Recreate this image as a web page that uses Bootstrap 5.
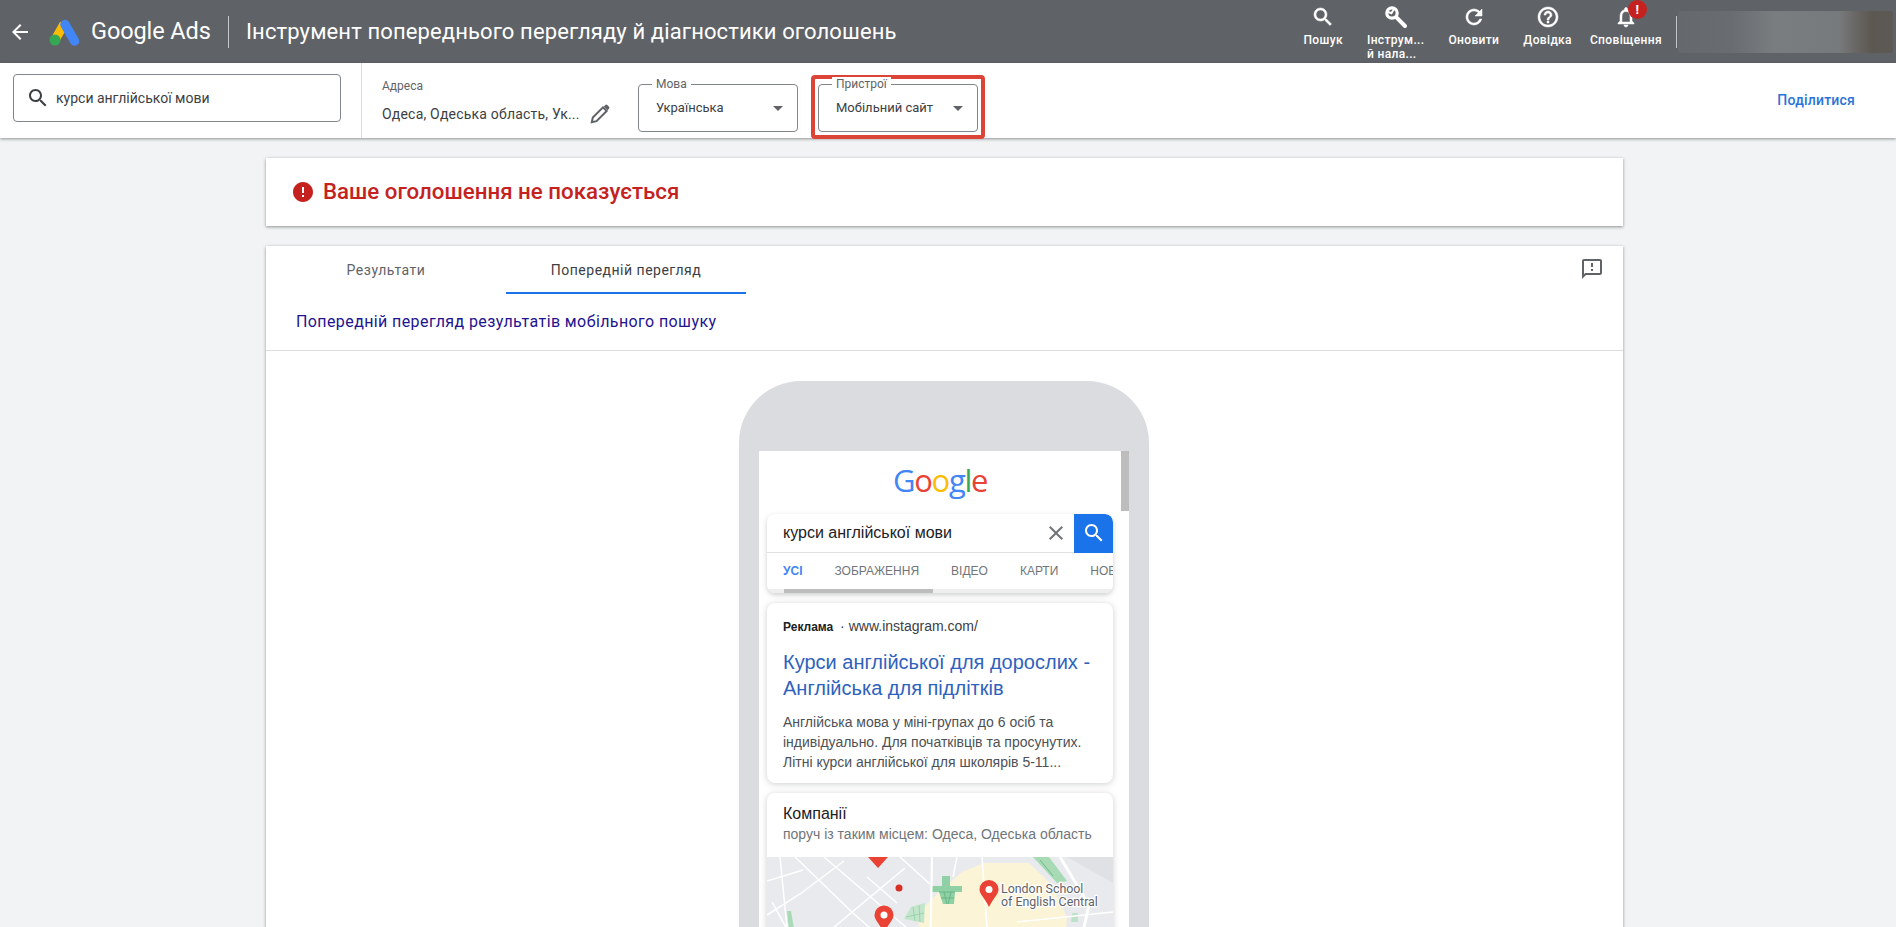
<!DOCTYPE html>
<html lang="uk">
<head>
<meta charset="utf-8">
<title>Google Ads</title>
<link href="https://cdn.jsdelivr.net/npm/bootstrap@5.3.0/dist/css/bootstrap.min.css" rel="stylesheet">
<style>
html,body{height:927px;overflow:hidden}
body{background:#f1f3f4;font-family:Roboto,"Noto Sans",sans-serif;color:#3c4043;font-size:14px}
svg{display:block;flex:none}
.topbar{height:63px;background:#5f6368;color:#fff;padding-left:8px}
.back-ic{width:24px;height:24px;fill:#fff}
.ads-logo{width:32px;height:32px;margin-left:16px}
.ads-name{font-size:23.5px;margin-left:11px;width:137px;letter-spacing:-.1px}
.top-sep{width:1px;height:32px;background:#c5c8cb}
.page-title{font-size:22px;margin-left:17px;letter-spacing:.12px;white-space:nowrap}
.act-group{margin-left:auto;align-self:stretch;padding-right:3px}
.act-item{margin:0 12px;text-align:center;font-size:12px;font-weight:500;line-height:14px;padding-top:5px;position:relative;letter-spacing:.35px}
.act-last{margin:0 0 0 6px}
.act-item svg{width:24px;height:24px;fill:#fff;stroke:#fff;stroke-width:.5px;margin:0 auto 4px}
.act-item svg.wrench-ic{stroke-width:0}
.act-wrap{display:inline-block;text-align:left}
.act-alert{position:absolute;top:0;left:50%;margin-left:2px;width:19px;height:19px;border-radius:50%;background:#c5221f;color:#fff;font-size:13px;font-weight:700;line-height:19px;text-align:center}
.acct-sep{width:1px;height:32px;background:#c5c8cb;margin-left:14px;margin-right:1px}
.acct-blur{width:215px;height:42px;border-radius:3px;background:linear-gradient(90deg,#65686c 0%,#696c70 25%,#7a7d80 45%,#777a7d 75%,#6a6866 82%,#5c5751 90%,#5d5a57 100%)}
.subbar{height:75px;background:#fff;box-shadow:0 1px 3px rgba(60,64,67,.55);position:relative}
.q-box{width:328px;height:48px;margin:-5px 0 0 13px;border:1px solid #80868b;border-radius:4px;padding-left:12px;gap:6px;font-size:14px}
.q-box svg{width:24px;height:24px;fill:#3c4043}
.v-sep{width:1px;align-self:stretch;background:#dadce0;margin-left:20px}
.addr-col{margin-left:20px;width:239px;padding-top:12px;align-self:stretch}
.addr-lab{font-size:12px;color:#5f6368;line-height:22px}
.addr-row{margin-top:5px;font-size:14px;color:#3c4043;line-height:22px;gap:8px;letter-spacing:.2px}
.addr-row svg{width:24px;height:24px}
.sel-box{width:160px;height:48px;border:1px solid #80868b;border-radius:4px;position:relative;padding:0 14px 0 17px;font-size:13px;color:#3c4043}
.sel-lab{position:absolute;top:-8px;left:13px;background:#fff;padding:0 4px;font-size:12px;line-height:14px;color:#5f6368}
.sel-tri{width:0;height:0;border-left:5px solid transparent;border-right:5px solid transparent;border-top:5px solid #5f6368;margin-left:auto}
.sel-mova{margin:15px 0 0 17px}
.sel-mark{margin:13px 0 0 13px;border:4px solid #db4437;border-radius:4px;padding:5px 3px 3px}
.share-lnk{margin-left:auto;margin-right:41px;color:#2a74d8;font-size:14px;font-weight:500;letter-spacing:.2px;text-decoration:none}
.stage{padding:20px 273px 0 266px}
.sheet{background:#fff;box-shadow:0 1px 3px rgba(60,64,67,.55);border:0;border-radius:0}
.err-sheet{height:68px;padding-left:25px;gap:8px;color:#c5221f;font-size:22.3px;font-weight:500}
.err-sheet svg{width:24px;height:24px;fill:#c5221f}
.prev-sheet{margin-top:20px;height:700px;overflow:hidden}
.tab-row{height:48px;position:relative}
.tab-it{width:240px;text-align:center;line-height:49px;font-size:14px;letter-spacing:.5px;color:#5f6368}
.tab-on{color:#3c4043;border-bottom:2px solid #1a73e8}
.fb-ic{position:absolute;right:19px;top:11px;width:24px;height:24px;fill:#5f6368}
.prev-head{height:57px;padding-left:30px;color:#23138f;font-size:16px;letter-spacing:.4px;border-bottom:1px solid #dadce0}
.phone-shell{width:410px;margin:30px 0 0 473px;background:#dadce0;border-radius:62px 62px 0 0;padding:70px 20px 0;height:600px}
.phone-screen{background:#fff;height:600px;position:relative;padding:0 16px 0 8px;font-family:"Liberation Sans",Arial,sans-serif}
.m-thumb{position:absolute;right:0;top:0;width:8px;height:60px;background:#bdbdbd}
.g-logo{height:63px;font-family:"Open Sans",Roboto,sans-serif;font-size:31px;font-weight:500;letter-spacing:-1.3px;text-align:center;line-height:58px}
.g-b{color:#4285f4}.g-r{color:#ea4335}.g-y{color:#fbbc05}.g-g{color:#34a853}
.m-search{border-radius:8px;box-shadow:0 2px 5px rgba(60,64,67,.25);background:#fff;overflow:hidden}
.m-q{height:39px;border-bottom:1px solid #dfe1e5;padding-left:16px;font-size:16px;color:#202124}
.m-x{width:24px;height:24px;fill:#70757a;margin-left:auto;margin-right:6px}
.m-btn{width:39px;height:39px;background:#1a73e8;border-top-right-radius:8px}
.m-btn svg{width:24px;height:24px;fill:#fff}
.m-tabs{height:36px;font-size:12px;color:#70757a;padding-left:16px;white-space:nowrap;overflow:hidden}
.m-tabs span{margin-right:32px}
.m-tabs .m-on{color:#4285f4;font-weight:700;margin-right:32px}
.m-track{height:4px;background:#eee;position:relative}
.m-track i{display:block;width:149px;height:4px;margin-left:17px;background:#bdbdbd}
.m-card{margin-top:10px;background:#fff;border-radius:8px;box-shadow:0 1px 6px rgba(60,64,67,.25);overflow:hidden;padding:0 16px}
.ad-top{padding-top:13px;height:46px;line-height:20px;font-size:14px;color:#3c4043}
.ad-top b{font-size:12px;color:#202124;margin-right:3px}
.ad-t{font-size:20px;line-height:26px;color:#2f62bd}
.ad-d{margin-top:11px;line-height:20px;font-size:14px;color:#4d5156;height:71px}
.co-t{padding-top:11px;font-size:16px;line-height:20px;color:#202124}
.co-s{font-size:14px;line-height:20px;color:#70757a;height:33px}
.m-map{margin:0 -16px;height:110px}
.m-map svg{width:346px;height:110px}
.map-lab{font-family:Roboto,sans-serif;font-size:12.4px;fill:#5f6368;stroke:#fff;stroke-width:2.500px;paint-order:stroke}
</style>
</head>
<body>
<header class="topbar d-flex align-items-center">
  <svg class="back-ic" viewBox="0 0 24 24"><path d="M20 11H7.830l5.590-5.590L12 4l-8 8 8 8 1.410-1.410L7.830 13H20v-2z"/></svg>
  <svg class="ads-logo" viewBox="0 0 32 32">
    <path d="M7 24 16 8" stroke="#fbbc04" stroke-width="9"/>
    <path d="M17 8.500 26.500 25" stroke="#4285f4" stroke-width="9.500" stroke-linecap="round"/>
    <circle cx="7" cy="24" r="5.500" fill="#34a853"/>
  </svg>
  <div class="ads-name">Google Ads</div>
  <div class="top-sep"></div>
  <div class="page-title">Інструмент попереднього перегляду й діагностики оголошень</div>
  <div class="act-group d-flex">
    <div class="act-item"><svg viewBox="0 0 24 24"><path d="M15.500 14h-.79l-.28-.27C15.410 12.590 16 11.110 16 9.500 16 5.910 13.090 3 9.500 3S3 5.910 3 9.500 5.910 16 9.500 16c1.610 0 3.090-.59 4.230-1.570l.27.28v.79l5 4.990L20.490 19l-4.990-5zm-6 0C7.010 14 5 11.990 5 9.500S7.010 5 9.500 5 14 7.010 14 9.500 11.990 14 9.500 14z"/></svg>Пошук</div>
    <div class="act-item"><svg class="wrench-ic" viewBox="0 0 24 24"><circle cx="8" cy="8" r="5.200" fill="none" stroke="#fff" stroke-width="3.200"/><path d="M10.800 2.800 7.400 8.300 3.200 6.600" fill="none" stroke="#fff" stroke-width="2"/><path d="M12.200 12.200 21 21" stroke="#fff" stroke-width="4" stroke-linecap="round"/></svg><span class="act-wrap">Інструм...<br>й нала...</span></div>
    <div class="act-item"><svg viewBox="0 0 24 24"><path d="M17.650 6.350C16.200 4.900 14.210 4 12 4c-4.420 0-7.990 3.580-7.990 8s3.570 8 7.990 8c3.730 0 6.840-2.550 7.730-6h-2.080c-.82 2.330-3.040 4-5.650 4-3.310 0-6-2.690-6-6s2.690-6 6-6c1.660 0 3.140.69 4.220 1.780L13 11h7V4l-2.350 2.350z"/></svg>Оновити</div>
    <div class="act-item"><svg viewBox="0 0 24 24"><path d="M11 18h2v-2h-2v2zm1-16C6.480 2 2 6.480 2 12s4.480 10 10 10 10-4.480 10-10S17.520 2 12 2zm0 18c-4.410 0-8-3.590-8-8s3.590-8 8-8 8 3.590 8 8-3.590 8-8 8zm0-14c-2.210 0-4 1.790-4 4h2c0-1.100.9-2 2-2s2 .9 2 2c0 2-3 1.750-3 5h2c0-2.250 3-2.500 3-5 0-2.210-1.790-4-4-4z"/></svg>Довідка</div>
    <div class="act-item act-last"><svg viewBox="0 0 24 24"><path d="M12 22c1.100 0 2-.9 2-2h-4c0 1.100.9 2 2 2zm6-6v-5c0-3.070-1.630-5.640-4.500-6.320V4c0-.83-.67-1.500-1.500-1.500s-1.500.67-1.500 1.500v.68C7.640 5.360 6 7.920 6 11v5l-2 2v1h16v-1l-2-2zm-2 1H8v-6c0-2.480 1.510-4.500 4-4.500s4 2.020 4 4.500v6z"/></svg>Сповіщення<span class="act-alert">!</span></div>
    <div class="d-flex align-items-center">
      <div class="acct-sep"></div>
      <div class="acct-blur"></div>
    </div>
  </div>
</header>

<section class="subbar d-flex align-items-center">
  <div class="q-box d-flex align-items-center">
    <svg viewBox="0 0 24 24"><path d="M15.500 14h-.79l-.28-.27C15.410 12.590 16 11.110 16 9.500 16 5.910 13.090 3 9.500 3S3 5.910 3 9.500 5.910 16 9.500 16c1.610 0 3.090-.59 4.230-1.570l.27.28v.79l5 4.990L20.490 19l-4.990-5zm-6 0C7.010 14 5 11.990 5 9.500S7.010 5 9.500 5 14 7.010 14 9.500 11.990 14 9.500 14z"/></svg>
    <span>курси англійської мови</span>
  </div>
  <div class="v-sep"></div>
  <div class="addr-col">
    <div class="addr-lab">Адреса</div>
    <div class="addr-row d-flex align-items-center">
      <span>Одеса, Одеська область, Ук...</span>
      <svg viewBox="0 0 24 24"><path d="M3.800 20.200 4.800 15.500 15 5.300 18.700 9 8.500 19.200Z" fill="none" stroke="#5f6368" stroke-width="2"/><path d="M15.800 4.500 17.300 3Q18.300 2.200 19.300 3L21 4.700Q21.800 5.700 21 6.700L19.500 8.200Z" fill="#5f6368"/></svg>
    </div>
  </div>
  <div class="sel-box sel-mova d-flex align-items-center">
    <span class="sel-lab">Мова</span><span>Українська</span><span class="sel-tri"></span>
  </div>
  <div class="sel-mark">
    <div class="sel-box d-flex align-items-center">
      <span class="sel-lab">Пристрої</span><span>Мобільний сайт</span><span class="sel-tri"></span>
    </div>
  </div>
  <a class="share-lnk" href="#">Поділитися</a>
</section>

<main class="stage">
  <div class="card sheet err-sheet flex-row align-items-center">
    <svg viewBox="0 0 24 24"><path d="M12 2C6.480 2 2 6.480 2 12s4.480 10 10 10 10-4.480 10-10S17.520 2 12 2zm1 15h-2v-2h2v2zm0-4h-2V7h2v6z"/></svg>
    <span>Ваше оголошення не показується</span>
  </div>
  <div class="card sheet prev-sheet">
    <div class="tab-row d-flex flex-shrink-0">
      <div class="tab-it">Результати</div>
      <div class="tab-it tab-on">Попередній перегляд</div>
      <svg class="fb-ic" viewBox="0 0 24 24"><path d="M20 2H4c-1.100 0-1.990.9-1.990 2L2 22l4-4h14c1.100 0 2-.9 2-2V4c0-1.100-.9-2-2-2zm0 14H5.170L4 17.170V4h16v12zM11 12h2v2h-2zm0-6h2v4h-2z"/></svg>
    </div>
    <div class="prev-head d-flex align-items-center flex-shrink-0">Попередній перегляд результатів мобільного пошуку</div>
    <div class="phone-shell flex-shrink-0">
      <div class="phone-screen">
        <div class="m-thumb"></div>
        <div class="g-logo"><span class="g-b">G</span><span class="g-r">o</span><span class="g-y">o</span><span class="g-b">g</span><span class="g-g">l</span><span class="g-r">e</span></div>
        <div class="m-search">
          <div class="m-q d-flex align-items-center">
            <span>курси англійської мови</span>
            <svg class="m-x" viewBox="0 0 24 24"><path d="M19 6.410L17.590 5 12 10.590 6.410 5 5 6.410 10.590 12 5 17.590 6.410 19 12 13.410 17.590 19 19 17.590 13.410 12z"/></svg>
            <div class="m-btn d-flex align-items-center justify-content-center"><svg viewBox="0 0 24 24"><path d="M15.500 14h-.79l-.28-.27C15.410 12.590 16 11.110 16 9.500 16 5.910 13.090 3 9.500 3S3 5.910 3 9.500 5.910 16 9.500 16c1.610 0 3.090-.59 4.230-1.570l.27.28v.79l5 4.990L20.490 19l-4.990-5zm-6 0C7.010 14 5 11.990 5 9.500S7.010 5 9.500 5 14 7.010 14 9.500 11.990 14 9.500 14z"/></svg></div>
          </div>
          <div class="m-tabs d-flex align-items-center"><span class="m-on">УСІ</span><span>ЗОБРАЖЕННЯ</span><span>ВІДЕО</span><span>КАРТИ</span><span>НОВИНИ</span></div>
          <div class="m-track"><i></i></div>
        </div>
        <div class="m-card">
          <div class="ad-top"><b>Реклама</b> · <span>www.instagram.com/</span></div>
          <div class="ad-t">Курси англійської для дорослих - Англійська для підлітків</div>
          <div class="ad-d">Англійська мова у міні-групах до 6 осіб та індивідуально. Для початківців та просунутих. Літні курси англійської для школярів 5-11...</div>
        </div>
        <div class="m-card">
          <div class="co-t">Компанії</div>
          <div class="co-s">поруч із таким місцем: Одеса, Одеська область</div>
          <div class="m-map">
            <svg viewBox="0 0 346 110">
              <rect width="346" height="110" fill="#e8eaed"/>
              <path d="M195 15 217 6 262 6 285 28 300 60 296 110 150 110 152 55 172 35Z" fill="#fcf4d6"/>
              <path d="M305 56h6v9h-7Z" fill="#bfe3c8"/>
              <path d="M266 0 282 0 300 24 290 26Z" fill="#a8dab5"/>
              <path d="M175 19h8v10h12v6h-7l-1 12h-11l-4-12h-7v-6h10Z" fill="#8fd0a5"/>
              <path d="M172 35h16M174 41h13M177 35l3 12M184 35l-3 12M273 3l13 16" stroke="#5fb27f" stroke-width=".8" fill="none"/>
              <path d="M137 62 144 50 158 46 157 66Z" fill="#c3e5cc"/>
              <path d="M146 50 148 64M152 48 153 65M139 60 157 56" stroke="#8fd0a5" stroke-width=".8" fill="none"/>
              <path d="M20 54 24 54 27 72 22 72Z" fill="#a8dab5"/>
              <g stroke="#fff" stroke-width="1.500" fill="none">
                <path d="M28 0 87 57 103 71M77 4 33 37 0 58M57 0 120 54 140 71M138 11 66 71M133 0 163 27M13 0 20 71M0 24 36 13M5 45 30 90M100 20 130 46M215 0 220 70M190 0 186 20M250 65 346 55"/>
                <path d="M165 0 163 110" stroke-width="2.200"/>
                <path d="M293 0 322 48 308 110" stroke-width="3"/>
              </g>
              <path d="M300 0 346 26 346 0Z" fill="#dfe1e5"/>
              <path d="M111 11 101 0H121Z" fill="#ea4335"/>
              <circle cx="132" cy="31" r="3.500" fill="#d93025"/>
              <circle cx="200" cy="74" r="3.500" fill="#d93025"/>
              <g fill="#ea4335">
                <path d="M222 50C217 40 212.500 37 212.500 32.500A9.500 9.500 0 0 1 231.500 32.500C231.500 37 227 40 222 50Z"/>
                <path d="M117 76C112 66 107.500 63 107.500 58A9.500 9.500 0 0 1 126.500 58C126.500 63 122 66 117 76Z"/>
              </g>
              <circle cx="222" cy="32.500" r="3.500" fill="#fff"/>
              <circle cx="117" cy="58" r="3.500" fill="#fff"/>
              <text class="map-lab" x="234" y="36">London School</text>
              <text class="map-lab" x="234" y="49">of English Central</text>
            </svg>
          </div>
        </div>
      </div>
    </div>
  </div>
</main>
<script src="https://cdn.jsdelivr.net/npm/bootstrap@5.3.0/dist/js/bootstrap.bundle.min.js"></script>
</body>
</html>
